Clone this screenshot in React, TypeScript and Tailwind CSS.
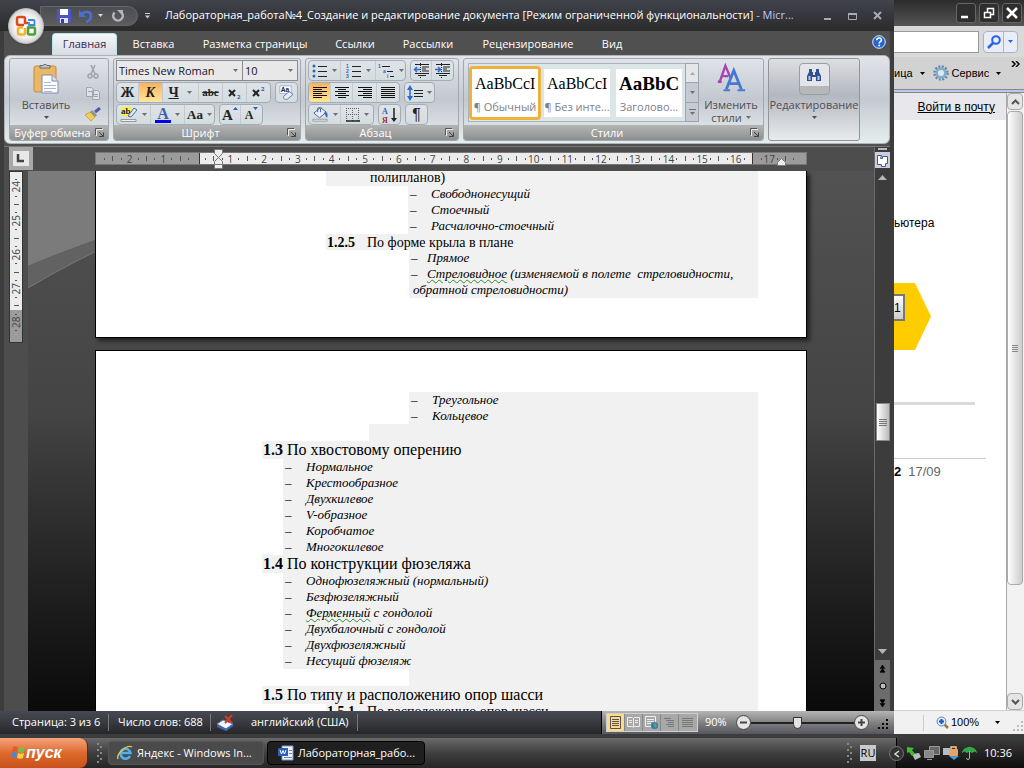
import type { ReactNode } from 'react';

/* ------------------------------------------------------------- */
/* Data                                                          */
/* ------------------------------------------------------------- */
const TABS = [
  { label: 'Вставка', cls: 'w-[69px]' },
  { label: 'Разметка страницы', cls: 'w-[126px]' },
  { label: 'Ссылки', cls: 'w-[66px]' },
  { label: 'Рассылки', cls: 'w-[72px]' },
  { label: 'Рецензирование', cls: 'w-[120px]' },
  { label: 'Вид', cls: 'w-[40px]' },
];

const TAIL = ['Нормальное', 'Крестообразное', 'Двухкилевое', 'V-образное', 'Коробчатое', 'Многокилевое'];

const RULER_LEFT = ['·', '|', '·', '2', '·', '|', '·', '1', '·', '|', '·'];
const RULER_MAIN = Array.from({ length: 65 }, (_, i) => {
  if (i % 2 === 0) return '·';
  return i % 4 === 3 ? String((i + 1) / 4) : '|';
});
const RULER_SIDE = ['·', '24', '·', '|', '·', '25', '·', '|', '·', '26', '·', '|', '·', '27', '·', '|'];

/* ------------------------------------------------------------- */
/* Small parts                                                   */
/* ------------------------------------------------------------- */
function Caret({ className = 'text-[#6b6f76]' }: { className?: string }) {
  return (
    <svg viewBox="0 0 5 3" className={`h-[3px] w-[5px] shrink-0 ${className}`}>
      <path d="M0 0h5L2.5 3z" fill="currentColor" />
    </svg>
  );
}

function Cluster({ children, className = '' }: { children: ReactNode; className?: string }) {
  return (
    <div
      className={`flex h-[21px] divide-x divide-[#c3cbd0] overflow-hidden rounded-sm border border-[#a3adb5] bg-linear-to-b from-[#dfe3e8] to-[#d3dde0] ${className}`}
    >
      {children}
    </div>
  );
}

function Tool({
  label,
  children,
  active = false,
  className = 'w-[22px]',
}: {
  label: string;
  children: ReactNode;
  active?: boolean;
  className?: string;
}) {
  return (
    <button
      type="button"
      aria-label={label}
      className={`flex items-center justify-center gap-1 text-[#222] ${className} ${
        active ? 'bg-linear-to-b from-[#fbb25c] to-[#ffe69a]' : ''
      }`}
    >
      {children}
    </button>
  );
}

function Group({ title, children, className }: { title: string; children: ReactNode; className: string }) {
  return (
    <section
      className={`flex shrink-0 flex-col overflow-hidden rounded-[3px] border border-[#a4a7ad] bg-linear-to-b from-[#e0e3e8] via-[#c3c8d0] to-[#e6efef] ${className}`}
    >
      <div className="flex-1 overflow-hidden">{children}</div>
      <footer className="flex h-[15px] items-center bg-linear-to-b from-[#b3b5b5] to-[#8e9090] pr-1 text-[11px] leading-[15px] text-white">
        <span className="flex-1 text-center whitespace-nowrap">{title}</span>
        <svg viewBox="0 0 9 9" className="h-[9px] w-[9px] shrink-0" fill="none">
          <path d="M.5 7V.5H7" stroke="#555" />
          <path d="M1.5 8V1.5H8" stroke="#eee" />
          <path d="M4 4l4 4M8.5 4.5v4H4" stroke="#444" />
        </svg>
      </footer>
    </section>
  );
}

function Lines({ rows }: { rows: number[][] }) {
  return (
    <svg viewBox="0 0 16 14" className="h-[14px] w-4" shapeRendering="crispEdges">
      {rows.map(([x, w], i) => (
        <rect key={i} x={x} y={i * 2 + 1} width={w} height="1" fill="#111" />
      ))}
    </svg>
  );
}

function ListIcon({ marks }: { marks: string[] }) {
  return (
    <svg viewBox="0 0 16 16" className="h-4 w-4 font-['Liberation_Sans']">
      {marks.map((m, i) =>
        m === 'dot' ? (
          <circle key={i} cx="2" cy={3 + i * 5} r="1.5" fill="#3461b5" />
        ) : (
          <text key={i} x="0" y={5 + i * 5} fontSize="5" fontWeight="700" fill="#3461b5">
            {m}
          </text>
        ),
      )}
      <path d="M6 3.500h9M6 8.500h9M6 13.500h9" stroke="#222" />
    </svg>
  );
}

function IndentIcon({ flip = false }: { flip?: boolean }) {
  return (
    <svg viewBox="0 0 17 15" className="h-[15px] w-[17px]" fill="none">
      <path d="M2 1.500h14M9 4h7M9 6h4M9 8h7M2 10.500h14M5 12.500h8" stroke="#222" />
      <path d="M7.500 0v15" stroke="#222" strokeDasharray="1 1" />
      <path d={flip ? 'M1 6.500h5M4 4l2.500 2.500L4 9' : 'M2 6.500h5M4 4L1.500 6.500 4 9'} stroke="#2f68d0" strokeWidth="1.500" />
    </svg>
  );
}

/* ------------------------------------------------------------- */
/* Title bar and tabs                                            */
/* ------------------------------------------------------------- */
function OfficeButton() {
  return (
    <button
      type="button"
      aria-label="Office"
      className="absolute top-2 left-2 z-10 flex h-9 w-9 items-center justify-center rounded-full border border-[#bbb] bg-radial from-white via-[#f0f0f0] to-[#a9a9a9] shadow"
    >
      <svg viewBox="0 0 24 24" className="h-6 w-6 shrink-0" fill="none" strokeWidth="2.500">
        <path d="M10 11H5a2 2 0 0 1-2-2V5a2 2 0 0 1 2-2h4a2 2 0 0 1 2 2v4h3" stroke="#dd4a1c" />
        <path d="M14 6h5.500a1 1 0 0 1 1 1v4H15V8" stroke="#3f8ad8" strokeWidth="1.800" />
        <path d="M11 14v5a1.500 1.500 0 0 1-1.500 1.500h-4A1.500 1.500 0 0 1 4 19v-4a1.500 1.500 0 0 1 1.500-1.500H9" stroke="#f5b325" />
        <path d="M14 17v-3.500h5.500A1.500 1.500 0 0 1 21 15v4a1.500 1.500 0 0 1-1.500 1.500h-4A1.500 1.500 0 0 1 14 19z" stroke="#4f9f3c" />
      </svg>
    </button>
  );
}

function TitleBar() {
  return (
    <header className="flex h-[31px] shrink-0 items-center bg-linear-to-b from-[#42444d] via-[#3a3c43] via-30% to-[#2b2b2b] pr-3 pl-10">
      <div className="flex h-5 w-[98px] shrink-0 items-center rounded-r-full border border-[#66666a] bg-linear-to-b from-[#4c4e54] to-[#5c5c5c] pl-4">
        <button type="button" aria-label="Сохранить">
          <svg viewBox="0 0 14 14" className="h-[14px] w-[14px]">
            <path d="M0 0h14v14H1.500L0 12.500z" fill="#4b55c8" />
            <path d="M3 0h8v6H3z" fill="#fff" />
            <path d="M3 9h8v5H3z" fill="#dfe3f4" />
            <path d="M4 10h3v4H4z" fill="#3a3f9c" />
          </svg>
        </button>
        <button type="button" aria-label="Отменить" className="ml-2 flex items-center gap-[5px]">
          <svg viewBox="0 0 14 14" className="h-[14px] w-[14px]" fill="none">
            <path d="M3 5c4-4 9-2 9 2 0 3-2 5-5 6" stroke="#4672d8" strokeWidth="2.500" />
            <path d="M0 1v7h7z" fill="#4672d8" />
          </svg>
          <Caret className="text-[#d5d5d5]" />
        </button>
        <button type="button" aria-label="Повторить" className="ml-2">
          <svg viewBox="0 0 14 14" className="h-[14px] w-[14px]" fill="none">
            <path d="M3.500 3.500a4.800 4.800 0 1 0 7 0" stroke="#b4b6bb" strokeWidth="2.500" />
            <path d="M6 1h6v6z" fill="#b4b6bb" />
          </svg>
        </button>
      </div>
      <svg viewBox="0 0 5 6" className="ml-[7px] h-[6px] w-[5px] shrink-0">
        <path d="M0 .5h5" stroke="#ccc" />
        <path d="M0 2.500h5L2.500 5.500z" fill="#ccc" />
      </svg>
      <h1 className="ml-[15px] flex-1 truncate text-[11px] font-medium text-white">
        Лабораторная_работа№4_Создание и редактирование документа [Режим ограниченной функциональности]
        <span className="font-normal text-[#b9c8ff]"> - Micr...</span>
      </h1>
      <div className="flex items-center gap-4 text-[#a7abb5]">
        <button type="button" aria-label="Свернуть">
          <svg viewBox="0 0 9 9" className="h-[9px] w-[9px]">
            <path d="M1 8h7" stroke="currentColor" strokeWidth="2" />
          </svg>
        </button>
        <button type="button" aria-label="Развернуть">
          <svg viewBox="0 0 9 9" className="h-[9px] w-[9px]">
            <path d="M.5 2.500h8v6h-8z" stroke="currentColor" fill="none" />
            <path d="M0 3h9" stroke="currentColor" strokeWidth="2" />
          </svg>
        </button>
        <button type="button" aria-label="Закрыть">
          <svg viewBox="0 0 9 9" className="h-[9px] w-[9px]">
            <path d="M1 1l7 7M8 1L1 8" stroke="currentColor" strokeWidth="2" />
          </svg>
        </button>
      </div>
    </header>
  );
}

function TabStrip() {
  return (
    <nav className="flex h-6 shrink-0 items-stretch bg-[#505050] pt-[2px] pr-1 pl-12 text-[11px] text-white">
      <button
        type="button"
        className="w-[65px] shrink-0 rounded-t border border-b-0 border-[#b9e6ec] bg-linear-to-b from-[#f4f6f8] to-[#d8dce2] text-[#3a2a55]"
      >
        Главная
      </button>
      <div className="flex flex-1 gap-1 pl-[2px]">
        {TABS.map((t) => (
          <button key={t.label} type="button" className={`text-center whitespace-nowrap ${t.cls}`}>
            {t.label}
          </button>
        ))}
      </div>
      <button type="button" aria-label="Справка">
        <svg viewBox="0 0 14 14" className="mb-1 h-[14px] w-[14px]">
          <circle cx="7" cy="7" r="6.300" fill="#2765cf" stroke="#dce9ff" />
          <path d="M4.800 5.300c0-3 4.600-3 4.600-.3 0 1.600-2.200 1.600-2.200 3.400" stroke="#fff" strokeWidth="1.600" fill="none" />
          <circle cx="7.200" cy="10.500" r="1" fill="#fff" />
        </svg>
      </button>
    </nav>
  );
}

/* ------------------------------------------------------------- */
/* Ribbon                                                        */
/* ------------------------------------------------------------- */
function ClipboardGroup() {
  return (
    <Group title="Буфер обмена" className="w-[100px]">
      <div className="flex h-full pl-3">
        <button type="button" className="flex w-12 flex-col items-center pt-1 text-[11px] text-[#4d4d57]">
          <svg viewBox="0 0 28 32" className="h-8 w-7">
            <rect x="2" y="3" width="22" height="26" rx="2" fill="#e9b765" stroke="#bf8d40" />
            <path d="M8 5V2.500h3a2.500 2.500 0 0 1 4 0h3V5z" fill="#c4cad0" stroke="#666" />
            <path d="M10 12h10l6 6v12H10z" fill="#fdfdff" stroke="#7c8daf" />
            <path d="M20 12v6h6" fill="#dbe4f5" stroke="#7c8daf" />
            <path d="M12 19.500h7M12 22.500h12M12 25.500h12M12 28.500h8" stroke="#a8b8d4" />
          </svg>
          <span className="mt-[2px] leading-4">Вставить</span>
          <Caret className="mt-[3px]" />
        </button>
        <div className="flex flex-1 flex-col items-center gap-[7px] pt-[6px] pl-2">
          <button type="button" aria-label="Вырезать">
            <svg viewBox="0 0 14 14" className="h-[14px] w-[14px]" fill="none" stroke="#a0a4ab" strokeWidth="1.500">
              <path d="M5 0l4 9M9 0L5 9" />
              <circle cx="4" cy="11" r="2" />
              <circle cx="10" cy="11" r="2" />
            </svg>
          </button>
          <button type="button" aria-label="Копировать">
            <svg viewBox="0 0 14 14" className="h-[14px] w-[14px]" fill="#dfe2e6" stroke="#a0a4ab">
              <path d="M.5 1.500h5l2 2v7h-7zM6.500 4.500h5l2 2v7h-7z" />
              <path d="M2 5.500h4M8 8.500h4M8 10.500h4" />
            </svg>
          </button>
          <button type="button" aria-label="Формат по образцу">
            <svg viewBox="0 0 16 14" className="h-[14px] w-4">
              <path d="M15 1l-5 4" stroke="#5259a8" strokeWidth="3" />
              <path d="M7 3l5 5-2 2-5-5z" fill="#8d8f99" />
              <path d="M5 5l5 5-4 4-6-6z" fill="#f3cc55" stroke="#b58c20" strokeWidth=".6" />
            </svg>
          </button>
        </div>
      </div>
    </Group>
  );
}

function FontGroup() {
  return (
    <Group title="Шрифт" className="w-[188px]">
      <div className="flex flex-col gap-px px-[2px] pt-px">
        <div className="flex h-[21px] border border-[#898d92] bg-[#e8e8e8]">
          <div className="relative flex-1 border-r border-[#898d92]">
            <select
              aria-label="Шрифт"
              defaultValue="tnr"
              className="block h-[19px] w-full appearance-none pl-[2px] text-[11px] leading-[19px] text-[#15152e] outline-none"
            >
              <option value="tnr">Times New Roman</option>
            </select>
            <Caret className="pointer-events-none absolute top-2 right-1 text-[#6b6f76]" />
          </div>
          <div className="relative w-[54px]">
            <select
              aria-label="Размер"
              defaultValue="10"
              className="block h-[19px] w-full appearance-none pl-[2px] text-[11px] leading-[19px] text-[#15152e] outline-none"
            >
              <option value="10">10</option>
            </select>
            <Caret className="pointer-events-none absolute top-2 right-1 text-[#6b6f76]" />
          </div>
        </div>
        <div className="flex gap-1">
          <Cluster className="font-['Liberation_Serif'] text-sm font-bold">
            <Tool label="Полужирный">Ж</Tool>
            <Tool label="Курсив" active className="w-6 italic">К</Tool>
            <Tool label="Подчеркнутый" className="w-9">
              <span className="leading-4 underline">Ч</span>
              <Caret className="ml-1 text-[#6b6f76]" />
            </Tool>
            <Tool label="Зачеркнутый" className="w-[25px] text-[11px] line-through">abc</Tool>
            <Tool label="Подстрочный" className="w-6">
              <svg viewBox="0 0 14 14" className="h-[14px] w-[14px] font-['Open_Sans']">
                <path d="M1 4l6 6M7 4l-6 6" stroke="#222" strokeWidth="2" />
                <text x="9" y="13" fontSize="6" fill="#2f5db5">2</text>
              </svg>
            </Tool>
            <Tool label="Надстрочный" className="w-[23px]">
              <svg viewBox="0 0 14 14" className="h-[14px] w-[14px] font-['Open_Sans']">
                <path d="M1 4l6 6M7 4l-6 6" stroke="#222" strokeWidth="2" />
                <text x="9" y="5" fontSize="6" fill="#2f5db5">2</text>
              </svg>
            </Tool>
          </Cluster>
          <Cluster>
            <Tool label="Очистить формат" className="w-[21px]">
              <svg viewBox="0 0 18 18" className="h-[17px] w-[17px] font-['Liberation_Sans']">
                <path d="M2 2h12v8H2z" fill="#fff" stroke="#889" strokeWidth=".6" />
                <text x="3" y="8" fontSize="7" fontWeight="700" fill="#223">Aa</text>
                <path d="M6 13l6-5 4 3-6 5c-3 1-5-1-4-3z" fill="#e8eefb" stroke="#5b79b8" />
              </svg>
            </Tool>
          </Cluster>
        </div>
        <div className="flex gap-1">
          <Cluster className="font-['Liberation_Serif'] text-base font-bold">
            <Tool label="Цвет выделения" className="w-[34px]">
              <svg viewBox="0 0 18 17" className="h-[17px] w-[18px]">
                <path d="M1 1h10v9H1z" fill="#f6ee4c" />
                <text x="1" y="8" fontSize="9" fontWeight="700" fill="#222">ab</text>
                <path d="M8 10l6-8 3 2-6 7z" fill="#dfe8f7" stroke="#456ba8" />
                <path d="M1 13.500h15v2H1z" fill="#eee" stroke="#999" />
              </svg>
              <Caret />
            </Tool>
            <Tool label="Цвет текста" className="w-[34px]">
              <span className="border-b-[3px] border-[#0000f0] px-[2px] leading-[13px] text-[#3c5fb0]">А</span>
              <Caret />
            </Tool>
            <Tool label="Регистр" className="w-[29px]">
              <span className="text-[13px]">Aa</span>
              <Caret />
            </Tool>
          </Cluster>
          <Cluster className="font-['Liberation_Serif'] font-bold">
            <Tool label="Увеличить размер" className="w-[21px] text-[15px]">
              <span className="flex items-start pt-[2px] leading-[17px]">
                A
                <svg viewBox="0 0 5 3" className="h-[3px] w-[5px]"><path d="M0 3h5L2.500 0z" fill="#2f5db5" /></svg>
              </span>
            </Tool>
            <Tool label="Уменьшить размер" className="w-[21px] text-xs">
              <span className="flex items-start pt-[2px] leading-[17px]">
                A
                <svg viewBox="0 0 5 3" className="h-[3px] w-[5px]"><path d="M0 0h5L2.500 3z" fill="#2f5db5" /></svg>
              </span>
            </Tool>
          </Cluster>
        </div>
      </div>
    </Group>
  );
}

function ParagraphGroup() {
  return (
    <Group title="Абзац" className="w-[154px]">
      <div className="flex flex-col gap-px px-[2px] pt-px">
        <div className="flex gap-1">
          <Cluster>
            <Tool label="Маркеры" className="w-8"><ListIcon marks={['dot', 'dot', 'dot']} /><Caret /></Tool>
            <Tool label="Нумерация" className="w-[35px]"><ListIcon marks={['1', '2', '3']} /><Caret /></Tool>
            <Tool label="Многоуровневый список" className="w-[29px]">
              <svg viewBox="0 0 17 16" className="h-4 w-[17px] font-['Liberation_Sans']">
                <path d="M4 3.500h8M9 8.500h6M12 13.500h4" stroke="#222" />
                <text x="0" y="5" fontSize="5" fontWeight="700" fill="#3461b5">1</text>
                <text x="5" y="10" fontSize="5" fontWeight="700" fill="#3461b5">a</text>
                <text x="9" y="15" fontSize="5" fontWeight="700" fill="#3461b5">i</text>
              </svg>
              <Caret />
            </Tool>
          </Cluster>
          <Cluster>
            <Tool label="Уменьшить отступ" className="w-[21px]"><IndentIcon /></Tool>
            <Tool label="Увеличить отступ" className="w-[21px]"><IndentIcon flip /></Tool>
          </Cluster>
        </div>
        <div className="flex gap-1">
          <Cluster>
            <Tool label="По левому краю" active>
              <Lines rows={[[1, 14], [1, 9], [1, 14], [1, 9], [1, 14], [1, 9]]} />
            </Tool>
            <Tool label="По центру">
              <Lines rows={[[1, 14], [4, 8], [1, 14], [4, 8], [1, 14], [4, 8]]} />
            </Tool>
            <Tool label="По правому краю" className="w-6">
              <Lines rows={[[1, 14], [6, 9], [1, 14], [6, 9], [1, 14], [6, 9]]} />
            </Tool>
            <Tool label="По ширине">
              <Lines rows={[[1, 14], [1, 14], [1, 14], [1, 14], [1, 14], [1, 14]]} />
            </Tool>
          </Cluster>
          <Cluster>
            <Tool label="Интервал" className="w-[29px]">
              <svg viewBox="0 0 16 16" className="h-4 w-4">
                <path d="M3 3v10" stroke="#2f68d0" strokeWidth="1.500" />
                <path d="M0 5l3-5 3 5zM0 11l3 5 3-5z" fill="#2f68d0" />
                <path d="M7 5.500h9M7 8.500h9M7 11.500h9" stroke="#222" />
              </svg>
              <Caret />
            </Tool>
          </Cluster>
        </div>
        <div className="flex gap-1">
          <Cluster>
            <Tool label="Заливка" className="w-8">
              <svg viewBox="0 0 18 17" className="h-[17px] w-[17px]">
                <path d="M9 1l6 5-7 6-6-5z" fill="#e9eef8" stroke="#41629f" />
                <path d="M6 6V2a2 2 0 0 1 3 0v4" fill="none" stroke="#41629f" />
                <path d="M14 5c3 2 3 4 2 7-2-1-2-4-3-5z" fill="#3c6ac4" />
                <path d="M1 13.500h15v2H1z" fill="#eee" stroke="#999" />
              </svg>
              <Caret />
            </Tool>
            <Tool label="Границы" className="w-8">
              <svg viewBox="0 0 14 14" className="h-[14px] w-[14px]" fill="none" stroke="#666" strokeDasharray="1 1">
                <path d="M.5 0v13M6.500 0v13M12.500 0v13M0 .5h13M0 6.500h13" />
                <path d="M0 13h14" stroke="#222" strokeWidth="1.500" strokeDasharray="none" />
              </svg>
              <Caret />
            </Tool>
          </Cluster>
          <Cluster>
            <Tool label="Сортировка" className="w-[21px]">
              <svg viewBox="0 0 16 18" className="h-[18px] w-4 font-['Liberation_Serif']">
                <text x="0" y="8" fontSize="8" fontWeight="700" fill="#3461b5">А</text>
                <text x="0" y="17" fontSize="8" fontWeight="700" fill="#9a3030">Я</text>
                <path d="M12 2v13" stroke="#222" strokeWidth="1.500" />
                <path d="M9 12h6l-3 4z" fill="#222" />
              </svg>
            </Tool>
          </Cluster>
          <Cluster>
            <Tool label="Знаки абзаца" className="w-[21px] font-['Liberation_Sans'] text-base">¶</Tool>
          </Cluster>
        </div>
      </div>
    </Group>
  );
}

function StyleCard({ sample, name, bold = false, active = false }: { sample: string; name: string; bold?: boolean; active?: boolean }) {
  return (
    <button
      type="button"
      className={`flex h-[54px] w-[72px] shrink-0 flex-col overflow-hidden border-[3px] bg-white ${
        active ? 'rounded-sm border-[#f0b13a]' : 'border-[#dce6e6]'
      }`}
    >
      <span
        className={`flex h-[31px] w-full items-center overflow-hidden pl-[3px] font-['Liberation_Serif'] whitespace-nowrap text-black ${
          bold ? 'text-[19px] font-bold' : 'text-base'
        }`}
      >
        {sample}
      </span>
      <span className="w-full text-center text-[11px] leading-[14px] whitespace-nowrap text-[#80808a]">{name}</span>
    </button>
  );
}

function StylesGroup() {
  return (
    <Group title="Стили" className="w-[301px]">
      <div className="flex h-full">
        <div className="mt-1 ml-1 flex h-[59px] items-center border border-r-0 border-[#a9b3b8] bg-[#dce6e6]">
          <StyleCard active sample="AaBbCcI" name="¶ Обычный" />
          <StyleCard sample="AaBbCcI" name="¶ Без инте..." />
          <StyleCard bold sample="AaBbC" name="Заголово..." />
        </div>
        <div className="mt-1 flex h-[59px] w-[14px] flex-col divide-y divide-[#9fa4ac] border border-[#9fa4ac] bg-[#c6cad2]">
          <button type="button" aria-label="Вверх" className="flex flex-1 items-center justify-center bg-[#e4e6e9]">
            <Caret className="rotate-180 text-[#a5a8ac]" />
          </button>
          <button type="button" aria-label="Вниз" className="flex flex-1 items-center justify-center"><Caret /></button>
          <button type="button" aria-label="Все стили" className="flex flex-1 flex-col items-center justify-center gap-[2px]">
            <span className="h-px w-[7px] bg-[#6b6f76]" />
            <Caret />
          </button>
        </div>
        <button type="button" className="flex flex-1 flex-col items-center pt-1 text-[11px] leading-[13px] text-[#4d4d57]">
          <svg viewBox="0 0 32 32" className="h-[30px] w-[30px]" fill="none">
            <path d="M2 20h4M4 20L10 3l6 14M6 14h7" stroke="#a545b5" strokeWidth="2.500" />
            <path d="M11 28l8-20 8 20M14 22h10" stroke="#4679d2" strokeWidth="3" />
            <path d="M8 29h7M23 29h8" stroke="#4679d2" strokeWidth="2" />
          </svg>
          <span className="mt-[5px]">Изменить</span>
          <span className="flex items-center gap-1">
            стили <Caret />
          </span>
        </button>
      </div>
    </Group>
  );
}

function EditingGroup() {
  return (
    <button
      type="button"
      className="flex w-[92px] shrink-0 flex-col items-center rounded-[3px] border border-[#92959b] bg-linear-to-b from-[#dedfe2] via-[#b3b7c0] via-45% to-[#e9ebec] pt-1 text-[11px] text-[#4d4d57]"
    >
      <span className="flex h-8 w-[31px] items-start justify-center rounded border border-[#9a9da3] bg-linear-to-b from-[#e3e5e8] from-75% to-[#b5b7b9] to-75% pt-1">
        <svg viewBox="0 0 16 14" className="h-[14px] w-4" fill="#315091">
          <path d="M3 1h3v3h1v3h2V4h1V1h3v3l2 4v5h-5V9H6v4H1V8l2-4z" />
          <path d="M2.500 8h2v4h-2zM11.500 8h2v4h-2z" fill="#b9cdf0" />
        </svg>
      </span>
      <span className="mt-[2px] leading-4 whitespace-nowrap">Редактирование</span>
      <Caret className="mt-[3px]" />
    </button>
  );
}

/* ------------------------------------------------------------- */
/* Rulers and document                                           */
/* ------------------------------------------------------------- */
function Marks({ items, className }: { items: string[]; className: string }) {
  return (
    <div className={`flex items-center ${className}`}>
      {items.map((m, i) =>
        m === '|' ? (
          <span key={i} className="flex flex-1 justify-center"><span className="h-[5px] w-px bg-[#555]" /></span>
        ) : m === '·' ? (
          <span key={i} className="flex flex-1 justify-center"><span className="h-[2px] w-px bg-[#555]" /></span>
        ) : (
          <span key={i} className="flex w-0 flex-1 justify-center text-[10px] leading-3">{m}</span>
        ),
      )}
    </div>
  );
}

function SideMarks({ items, className }: { items: string[]; className: string }) {
  return (
    <div className={`flex flex-col items-center ${className}`}>
      {items.map((m, i) =>
        m === '|' ? (
          <span key={i} className="flex flex-1 items-center"><span className="h-px w-[5px] bg-[#555]" /></span>
        ) : m === '·' ? (
          <span key={i} className="flex flex-1 items-center"><span className="h-px w-[2px] bg-[#555]" /></span>
        ) : (
          <span key={i} className="flex h-0 flex-1 rotate-180 items-center justify-center text-[10px] leading-3 [writing-mode:vertical-rl]">
            {m}
          </span>
        ),
      )}
    </div>
  );
}

function TopRuler() {
  return (
    <div className="flex h-6 shrink-0 items-start bg-[#4d4d4d] px-[5px]">
      <button type="button" aria-label="Табуляция" className="h-[23px] w-6 border-[4px] border-[#a8a8a8] bg-[#e8e8e8]">
        <svg viewBox="0 0 16 15" className="h-full w-full">
          <path d="M5 3v7h6" stroke="#444" strokeWidth="2.500" fill="none" />
        </svg>
      </button>
      <div className="min-w-0 flex-1">
        <div className="relative mx-auto mt-[5px] flex h-[13px] w-[712px] border border-[#777] text-[#444]">
          <Marks items={RULER_LEFT} className="w-[103px] bg-[#9b9b9b] pr-[6px] pl-1" />
          <Marks items={RULER_MAIN} className="flex-1 border-x border-[#333] bg-[#ececec] pr-1 pl-px" />
          <Marks items={['·', '17', '·', '|', '·', ' ']} className="w-[53px] bg-[#9b9b9b] pl-1" />
          <svg viewBox="0 0 9 20" className="absolute -top-1 left-[118px] h-5 w-[9px]">
            <path d="M.5.5h8v4l-4 4-4-4zM.5 15.500v-3l4-4 4 4v3zM.5 15.500h8v4h-8z" fill="#eee" stroke="#777" />
          </svg>
          <svg viewBox="0 0 9 8" className="absolute top-[5px] left-[681px] h-2 w-[9px]">
            <path d="M.5 7.500v-3l4-4 4 4v3z" fill="#eee" stroke="#777" />
          </svg>
        </div>
      </div>
    </div>
  );
}

function Item({ children, className = 'ml-[187px]' }: { children: ReactNode; className?: string }) {
  return (
    <li className={`flex h-4 bg-[#f1f1f1] pl-[2px] text-[13px] leading-4 whitespace-nowrap italic ${className}`}>
      <span className="w-[21px] shrink-0">–</span>
      <span>{children}</span>
    </li>
  );
}

function Heading({ num, children }: { num: string; children: ReactNode }) {
  return (
    <h2 className="ml-[166px] h-[18px] bg-[#f1f1f1] pl-px text-base leading-[18px] whitespace-nowrap">
      <b>{num}</b> {children}
    </h2>
  );
}

const wavy = 'underline decoration-[#2b8a2b] decoration-wavy decoration-1 underline-offset-1';

function Pages() {
  return (
    <div className="relative min-w-0 flex-1 overflow-hidden bg-linear-to-b from-[#525252] via-[#444] via-45% to-[#0a0a0a]">
      <svg viewBox="0 0 100 140" className="absolute top-0 left-0 h-[140px] w-[100px]">
        <path d="M0 0h100v58Q50 74 0 95z" fill="#7b7b7b" />
        <path d="M0 95Q50 74 100 58v8Q50 87 0 117z" fill="#626262" />
        <path d="M0 117Q50 87 100 66" stroke="#777" fill="none" />
      </svg>
      <div className="relative flex flex-col gap-3 font-['Liberation_Serif',serif] text-black">
        <article className="mx-auto h-[167px] w-[712px] border border-t-0 border-black bg-white pr-12 shadow-[3px_3px_4px_#222]">
          <p className="ml-[230px] h-[15px] bg-[#f1f1f1] pl-11 text-sm leading-[14px]">полипланов)</p>
          <ul>
            <Item className="ml-[312px]">Свободнонесущий</Item>
            <Item className="ml-[312px]">Стоечный</Item>
            <Item className="ml-[312px]">Расчалочно-стоечный</Item>
          </ul>
          <h3 className="ml-[230px] flex h-4 bg-[#f1f1f1] pl-px text-sm leading-[17px]">
            <b className="w-10">1.2.5</b>По форме крыла в плане
          </h3>
          <ul>
            <li className="ml-[313px] flex h-4 bg-[#f1f1f1] pl-[2px] text-[13px] leading-4 italic">
              <span className="w-4">–</span>Прямое
            </li>
            <li className="ml-[313px] h-8 bg-[#f1f1f1] pl-1 text-[13px] leading-4 whitespace-nowrap italic">
              <span className="inline-block w-[14px] -indent-[2px]">–</span>
              <span className={wavy}>Стреловидное</span> (изменяемой в полете&nbsp; стреловидности,
              <br />
              обратной стреловидности)
            </li>
          </ul>
        </article>
        <article className="mx-auto w-[712px] border border-black bg-white pt-[41px] pr-12">
          <ul>
            <Item className="ml-[313px]">Треугольное</Item>
            <Item className="ml-[313px]">Кольцевое</Item>
          </ul>
          <div className="ml-[273px] h-[17px] bg-[#f1f1f1]" />
          <Heading num="1.3">По хвостовому оперению</Heading>
          <ul>
            {TAIL.map((t) => (
              <Item key={t}>{t}</Item>
            ))}
          </ul>
          <Heading num="1.4">По конструкции фюзеляжа</Heading>
          <ul>
            <Item>Однофюзеляжный (нормальный)</Item>
            <Item>Безфюзеляжный</Item>
            <Item>
              <span className={wavy}>Ферменный</span> с гондолой
            </Item>
            <Item>Двухбалочный с гондолой</Item>
            <Item>Двухфюзеляжный</Item>
            <Item>Несущий фюзеляж</Item>
          </ul>
          <div className="ml-[313px] h-[17px] bg-[#f1f1f1]" />
          <Heading num="1.5">По типу и расположению опор шасси</Heading>
          <h3 className="ml-[230px] flex h-4 bg-[#f1f1f1] pl-px text-sm leading-4">
            <b className="w-10">1.5.1</b>По расположению опор шасси
          </h3>
        </article>
      </div>
    </div>
  );
}

function WordScrollbar() {
  return (
    <div className="flex w-4 shrink-0 flex-col items-center border-l border-[#6a6a6a] bg-[#3c3c3c]">
      <span className="h-[3px] w-[9px] border-b-2 border-[#bbb]" />
      <button type="button" aria-label="Линейка" className="mt-[2px] flex h-4 w-[15px] items-center justify-center bg-[#c6cee0]">
        <svg viewBox="0 0 13 13" className="h-[13px] w-[13px]" fill="#fff" stroke="#445a88">
          <path d="M1.500 1.500h4l-1 3h2v-2h5v7h-2v3h-4v-2h-4z" />
        </svg>
      </button>
      <button type="button" aria-label="Вверх" className="mt-[7px]">
        <svg viewBox="0 0 9 5" className="block h-[5px] w-[9px]"><path d="M0 5h9L4.500 0z" fill="#b5b5b5" /></svg>
      </button>
      <div className="w-full flex-[221]" />
      <div className="flex h-[38px] w-[14px] shrink-0 flex-col items-center justify-center gap-px border border-[#888] bg-linear-to-r from-white to-[#bbb]">
        <span className="h-px w-2 bg-[#777]" />
        <span className="h-px w-2 bg-[#777]" />
        <span className="h-px w-2 bg-[#777]" />
        <span className="h-px w-2 bg-[#777]" />
      </div>
      <div className="w-full flex-[206]" />
      <button type="button" aria-label="Вниз" className="mb-[6px]">
        <svg viewBox="0 0 9 5" className="block h-[5px] w-[9px]"><path d="M0 0h9L4.500 5z" fill="#b5b5b5" /></svg>
      </button>
      <div className="flex h-[51px] w-full shrink-0 flex-col items-center justify-around bg-[#6c6c6c] text-black">
        <svg viewBox="0 0 7 8" className="h-2 w-[7px]"><path d="M1 3.500h5L3.500 0zM1 7h5L3.500 3.500zM1 7.500h5" fill="#000" stroke="#000" strokeWidth=".5" /></svg>
        <svg viewBox="0 0 8 8" className="h-2 w-2"><circle cx="4" cy="4" r="3" fill="#bbb" stroke="#000" /></svg>
        <svg viewBox="0 0 7 8" className="h-2 w-[7px]"><path d="M1 1h5L3.500 4.500zM1 4.500h5L3.500 8zM1 .5h5" fill="#000" stroke="#000" strokeWidth=".5" /></svg>
      </div>
    </div>
  );
}

function ViewIcon({ d, color = '#555' }: { d: string; color?: string }) {
  return (
    <svg viewBox="0 0 13 13" className="h-[13px] w-[13px]" fill="none" stroke={color}>
      <path d={d} />
    </svg>
  );
}

function StatusBar() {
  return (
    <footer className="flex h-[23px] shrink-0 items-center bg-linear-to-b from-[#454953] via-[#3a3c40] via-45% to-[#26272a] text-[11px] font-medium whitespace-nowrap text-white">
      <span className="ml-3 w-[97px] border-r border-[#77797e]">Страница: 3 из 6</span>
      <span className="w-[102px] border-r border-[#77797e] pl-[9px]">Число слов: 688</span>
      <svg viewBox="0 0 17 16" className="ml-[6px] h-4 w-[17px]">
        <path d="M0 9l6-4 10 4-7 5z" fill="#f5f7fb" stroke="#5c7fc0" />
        <path d="M0 11l9 4 7-5" stroke="#3d66b8" fill="none" strokeWidth="2" />
        <path d="M8 1l7 7M15 0L8 8" stroke="#dc3a20" strokeWidth="2" />
      </svg>
      <span className="ml-[17px] w-[107px] border-r border-[#77797e]">английский (США)</span>
      <div className="ml-auto flex h-full w-[293px] items-center border-l border-black bg-linear-to-b from-[#b5b5b5] via-[#828282] via-50% to-[#55585f] pl-1">
        <div className="flex h-[19px] divide-x divide-[#888] border border-[#d0d0d0] bg-[#a8a8a8]">
          <button type="button" aria-label="Разметка" className="w-[18px] bg-[#ffd98a] pl-[2px]"><ViewIcon d="M1.500.5h10v12h-10zM3 3.500h7M3 5.500h7M3 7.500h7M3 9.500h7" /></button>
          <button type="button" aria-label="Чтение" className="w-[18px] pl-[2px]"><ViewIcon d="M.5 1.500h5l1 1 1-1h5v9h-5l-1 1-1-1h-5zM6.500 2v9M2 4.500h3M2 6.500h3M8 4.500h3M8 6.500h3" color="#eee" /></button>
          <button type="button" aria-label="Веб" className="w-[18px] pl-[2px]">
            <svg viewBox="0 0 13 13" className="h-[13px] w-[13px]">
              <path d="M.5.5h10v10H.5zM2 3.500h7M2 5.500h7M2 7.500h4" fill="none" stroke="#eee" />
              <circle cx="9.500" cy="9.500" r="3.500" fill="#3278b8" />
              <path d="M8 8l3-1 1 3-2 2z" fill="#58a85c" />
            </svg>
          </button>
          <button type="button" aria-label="Структура" className="w-[18px] pl-[2px]"><ViewIcon d="M1 2.500h7M3 4.500h8M5 6.500h6M3 8.500h8M5 10.500h6" color="#777" /></button>
          <button type="button" aria-label="Черновик" className="w-[18px] pl-[2px]"><ViewIcon d="M1 2.500h11M1 4.500h11M1 6.500h11M1 8.500h11M1 10.500h11" color="#777" /></button>
        </div>
        <span className="ml-[7px] w-[31px] font-normal">90%</span>
        <button type="button" aria-label="Уменьшить" className="flex h-[15px] w-[15px] items-center justify-center rounded-full border border-[#444] bg-[#e5e5e5]">
          <svg viewBox="0 0 9 9" className="h-[9px] w-[9px]"><path d="M1 4.500h7" stroke="#444" strokeWidth="2" /></svg>
        </button>
        <input
          type="range"
          aria-label="Масштаб"
          defaultValue={45}
          className="h-4 w-[103px] appearance-none bg-[linear-gradient(#222,#222)] bg-[length:100%_2px] bg-center bg-no-repeat [&::-webkit-slider-thumb]:h-3 [&::-webkit-slider-thumb]:w-[9px] [&::-webkit-slider-thumb]:appearance-none [&::-webkit-slider-thumb]:rounded-b-full [&::-webkit-slider-thumb]:border [&::-webkit-slider-thumb]:border-[#333] [&::-webkit-slider-thumb]:bg-[#e2e2e2]"
        />
        <button type="button" aria-label="Увеличить" className="flex h-[15px] w-[15px] items-center justify-center rounded-full border border-[#444] bg-[#e5e5e5]">
          <svg viewBox="0 0 9 9" className="h-[9px] w-[9px]"><path d="M1 4.500h7M4.500 1v7" stroke="#444" strokeWidth="2" /></svg>
        </button>
        <Grip className="mt-1 ml-2 text-black" />
      </div>
    </footer>
  );
}

function Grip({ className }: { className: string }) {
  return (
    <svg viewBox="0 0 12 12" className={`h-3 w-3 ${className}`} fill="currentColor">
      <path d="M9 0h2v2H9zM5 4h2v2H5zM9 4h2v2H9zM1 8h2v2H1zM5 8h2v2H5zM9 8h2v2H9z" />
    </svg>
  );
}

/* ------------------------------------------------------------- */
/* Windows                                                       */
/* ------------------------------------------------------------- */
function WordWindow() {
  return (
    <main className="relative flex min-w-0 flex-1 flex-col font-['Open_Sans',sans-serif]">
      <OfficeButton />
      <TitleBar />
      <div className="flex min-h-0 flex-1 flex-col border-x-[4px] border-[#3d3d3d] bg-[#505050]">
        <TabStrip />
        <div className="flex h-[89px] shrink-0 gap-1 rounded-md border border-[#b0b3b8] bg-linear-to-b from-[#e1e4e9] via-[#c5cad2] to-[#e4eeee] p-[2px] pl-1">
          <ClipboardGroup />
          <FontGroup />
          <ParagraphGroup />
          <StylesGroup />
          <EditingGroup />
        </div>
        <div className="mt-[2px] flex min-h-0 flex-1 border-t border-[#777]">
          <div className="flex min-w-0 flex-1 flex-col">
            <TopRuler />
            <div className="flex min-h-0 flex-1">
              <div className="w-6 shrink-0 bg-[#4d4d4d] pl-[5px]">
                <div className="flex w-[14px] flex-col border border-[#333] text-[#444]">
                  <SideMarks items={RULER_SIDE} className="h-[138px] bg-[#ececec] pt-[3px]" />
                  <SideMarks items={['·', '28', '·']} className="h-8 bg-[#9b9b9b] pb-2" />
                </div>
              </div>
              <Pages />
            </div>
          </div>
          <WordScrollbar />
        </div>
      </div>
      <StatusBar />
    </main>
  );
}

function BrowserWindow() {
  return (
    <aside className="flex w-[130px] shrink-0 flex-col overflow-hidden bg-white font-['Liberation_Sans',sans-serif] text-black">
      <header className="flex h-[26px] shrink-0 items-center justify-end gap-[3px] bg-linear-to-b from-[#2c2c2c] to-[#555] pr-[2px] text-white">
        {['M4 13h7', 'M4.500 8.500h6v5h-6zM7.500 8V4.500h6v6H11', 'M4 4l10 10M14 4L4 14'].map((d, i) => (
          <button
            key={d}
            type="button"
            aria-label={['Свернуть', 'Восстановить', 'Закрыть'][i]}
            className="h-5 w-5 rounded-[3px] border border-[#666] bg-[#2e2e2e]"
          >
            <svg viewBox="0 0 18 18" className="h-[18px] w-[18px]" fill="none" stroke="currentColor" strokeWidth={i === 1 ? 1.5 : 2.5}>
              <path d={d} />
            </svg>
          </button>
        ))}
      </header>
      <div className="flex h-[31px] shrink-0 items-center bg-[#d9d9d9] pr-[6px]">
        <input aria-label="Поиск" className="h-[22px] w-[85px] border border-l-0 border-[#999] bg-white" />
        <div className="ml-1 flex h-[22px] flex-1 divide-x divide-[#a9b3cc] rounded-sm border border-[#a9b3cc] bg-[#e9edf7]">
          <button type="button" aria-label="Найти" className="flex flex-1 items-center justify-center">
            <svg viewBox="0 0 14 14" className="h-[14px] w-[14px]" fill="none" stroke="#2a62e0">
              <circle cx="9" cy="5" r="3.800" strokeWidth="2" />
              <path d="M6 8l-5 5" strokeWidth="2.500" />
            </svg>
          </button>
          <button type="button" aria-label="Ещё" className="flex w-[13px] items-center justify-center"><Caret className="text-[#2a62e0]" /></button>
        </div>
      </div>
      <div className="relative flex h-8 shrink-0 items-center overflow-hidden bg-[#d2d2d2] text-[11px]">
        <button type="button" className="flex items-center gap-[7px]">ица <Caret className="text-black" /></button>
        <button type="button" className="ml-2 flex items-center gap-[3px]">
          <svg viewBox="0 0 16 16" className="h-4 w-4">
            <circle cx="8" cy="8" r="6.500" fill="none" stroke="#5e8cae" strokeWidth="2.500" strokeDasharray="2 1.400" />
            <circle cx="8" cy="8" r="4.300" fill="#dbe8f0" stroke="#86acc6" strokeWidth="2.500" />
          </svg>
          Сервис <Caret className="ml-1 text-black" />
        </button>
        <svg viewBox="0 0 9 6" className="absolute top-1 right-1 h-[6px] w-[9px]" fill="none" stroke="#000" strokeWidth="1.500">
          <path d="M1 0l3 3-3 3M5 0l3 3-3 3" />
        </svg>
      </div>
      <div className="h-1 shrink-0 border-y border-[#888] bg-[#b9c8ee]" />
      <div className="flex min-h-0 flex-1">
        <div className="flex min-w-0 flex-1 flex-col">
          <div className="flex h-[27px] shrink-0 items-center justify-end bg-[#e8e8ec] pr-[11px]">
            <a href="#mail" className="text-xs whitespace-nowrap underline">Войти в почту</a>
          </div>
          <p className="mt-[95px] text-xs leading-4">ьютера</p>
          <div className="mt-[52px] flex h-[67px] w-[37px] shrink-0 items-start bg-[#ffcc00] pt-[11px] [clip-path:polygon(0_0,21px_0,100%_50%,21px_100%,0_100%)]">
            <button type="button" className="h-[27px] w-[11px] border-2 border-l-0 border-[#777] bg-linear-to-b from-white to-[#ccc] text-left text-xs">1</button>
          </div>
          <div className="mt-[52px] mr-[31px] h-[3px] shrink-0 bg-[#dadada]" />
          <div className="mt-[53px] mr-5 h-px shrink-0 bg-[#ccc]" />
          <p className="mt-[3px] flex gap-[7px] text-[13px] text-[#666]">
            <b className="text-black">2</b>17/09
          </p>
        </div>
        <div className="flex w-[18px] shrink-0 flex-col border-l border-[#aaa] bg-[#f2f2f2] pr-px">
          <button type="button" aria-label="Вверх" className="flex h-[17px] items-center justify-center rounded-sm border border-[#aaa] bg-[#e5e5e5]">
            <svg viewBox="0 0 9 6" className="h-[6px] w-[9px]"><path d="M1 5l3.500-3.500L8 5" stroke="#555" strokeWidth="2" fill="none" /></svg>
          </button>
          <div className="mt-px flex flex-[474] flex-col items-center justify-center gap-px rounded-sm border border-[#aaa] bg-linear-to-r from-white to-[#ccc]">
            <span className="h-px w-[6px] bg-[#888]" />
            <span className="h-px w-[6px] bg-[#888]" />
            <span className="h-px w-[6px] bg-[#888]" />
            <span className="h-px w-[6px] bg-[#888]" />
          </div>
          <div className="flex-[108]" />
          <button type="button" aria-label="Вниз" className="flex h-[17px] items-center justify-center rounded-sm border border-[#aaa] bg-[#e5e5e5]">
            <svg viewBox="0 0 9 6" className="h-[6px] w-[9px]"><path d="M1 1l3.500 3.500L8 1" stroke="#555" strokeWidth="2" fill="none" /></svg>
          </button>
        </div>
      </div>
      <footer className="flex h-6 shrink-0 items-center border-t border-[#d0d0d0] bg-[#f1f1f1] text-[11px]">
        <span className="ml-[29px] h-4 w-px bg-[#ccc]" />
        <svg viewBox="0 0 13 13" className="ml-3 h-[13px] w-[13px]">
          <path d="M8 8l4 4" stroke="#b07030" strokeWidth="2.500" />
          <circle cx="5.500" cy="5.500" r="4.500" fill="#dcecff" stroke="#5588c8" />
          <path d="M5.500 3v5M3 5.500h5" stroke="#1b55c0" strokeWidth="2" />
        </svg>
        <span className="ml-[2px]">100%</span>
        <Caret className="ml-4 text-black" />
        <Grip className="mt-2 ml-auto text-[#bbb]" />
      </footer>
    </aside>
  );
}

/* ------------------------------------------------------------- */
/* Taskbar                                                       */
/* ------------------------------------------------------------- */
function Handle({ className }: { className: string }) {
  return (
    <svg viewBox="0 0 6 20" className={`h-5 w-[6px] shrink-0 ${className}`} fill="#888">
      <path d="M1 0h2v2H1zM4 3h2v2H4zM1 6h2v2H1zM4 9h2v2H4zM1 12h2v2H1zM4 15h2v2H4zM1 18h2v2H1z" />
    </svg>
  );
}

function Taskbar() {
  return (
    <footer className="flex h-[34px] shrink-0 items-center border-t-[4px] border-[#3c3c3c] bg-linear-to-b from-[#6a6a6a] via-[#3f3f3f] via-50% to-[#262626] font-['Open_Sans',sans-serif] text-[11px] whitespace-nowrap text-white">
      <button
        type="button"
        className="flex h-full w-[88px] shrink-0 items-center rounded-r-lg border-r border-[#622] bg-linear-to-b from-[#f4a27a] via-[#dd6a2c] via-50% to-[#c9501a] pl-[10px] font-['Liberation_Sans'] text-base font-bold italic"
      >
        <svg viewBox="0 0 16 16" className="h-4 w-4 shrink-0">
          <path d="M3 2c2-1 3-1 5 0L7 7C5 6 4 6 2 7z" fill="#e35b2a" />
          <path d="M9 2c2 1 4 1 6 0l-1 5c-2 1-4 1-6 0z" fill="#7cbb42" />
          <path d="M2 8c2-1 3-1 5 0l-1 5c-2-1-3-1-5 0z" fill="#4a86d8" />
          <path d="M8 8c2 1 4 1 6 0l-1 5c-2 1-4 1-6 0z" fill="#f6cf3e" />
        </svg>
        пуск
      </button>
      <Handle className="ml-2" />
      <button type="button" className="ml-[6px] flex h-6 w-[156px] items-center gap-1 overflow-hidden rounded-sm border border-[#555] bg-[#4a4a4a] pl-2">
        <svg viewBox="0 0 16 16" className="h-4 w-4 shrink-0" fill="none">
          <path d="M13 11a5 5 0 1 1 .5-3H4" stroke="#4cb1ee" strokeWidth="2.600" />
          <path d="M1 14C-1 9 10-1 15 2" stroke="#f1c244" strokeWidth="1.400" />
        </svg>
        Яндекс - Windows In...
      </button>
      <button type="button" className="ml-[3px] flex h-6 w-[158px] items-center gap-1 overflow-hidden rounded-sm border border-black bg-[#1f1f1f] pl-[10px]">
        <svg viewBox="0 0 16 16" className="h-4 w-4 shrink-0">
          <path d="M4 1h11v14H4z" fill="#eef3fc" stroke="#7b97c8" />
          <path d="M11 5.500h3M11 8.500h3M6 12.500h8" stroke="#6a88bd" />
          <path d="M0 3h10v8H0z" fill="#2f5fb4" />
          <path d="M2 5l1.500 4L5 5.500 6.500 9 8 5" stroke="#fff" fill="none" />
        </svg>
        Лабораторная_рабо...
      </button>
      <div className="ml-auto flex h-full items-center">
        <Handle className="mr-2" />
        <span className="mr-5 h-4 w-4 bg-[#c9c9c9] text-center leading-4 text-black">RU</span>
      </div>
      <div className="relative flex h-full w-[128px] items-center gap-[3px] border-l border-black bg-linear-to-b from-[#3c3c3c] to-[#0e0e0e] pl-[10px]">
        <button type="button" aria-label="Скрытые значки" className="absolute top-2 -left-2 flex h-[15px] w-[15px] items-center justify-center rounded-full border border-[#777] bg-[#333]">
          <svg viewBox="0 0 8 8" className="h-2 w-2"><path d="M6 1L2 4l4 3" stroke="#ddd" strokeWidth="1.500" fill="none" /></svg>
        </button>
        <svg viewBox="0 0 14 14" className="h-[14px] w-[14px]">
          <path d="M5 8l7-1 2 4-6 3z" fill="#b9bcc4" />
          <path d="M0 1l7 1-2 2 3 4-3 2-3-4-2 1z" fill="#3ebd32" />
        </svg>
        <svg viewBox="0 0 16 14" className="h-[14px] w-4" stroke="#999">
          <path d="M5.500.5h10v8h-10z" fill="#666" />
          <path d="M.5 4.500h9v7h-9zM3 13.500h5" fill="#888" />
        </svg>
        <svg viewBox="0 0 16 14" className="h-[14px] w-4">
          <path d="M0 2h7v7H0z" fill="#b5bcc4" />
          <rect x="6" y="3" width="9" height="7" rx="1" fill="#e9a465" />
          <path d="M8 3V1h5v2" fill="none" stroke="#f4c9a0" strokeWidth="1.500" />
          <path d="M6 10h10l-5 4z" fill="#3b9be0" />
        </svg>
        <svg viewBox="0 0 15 14" className="h-[14px] w-[15px]">
          <path d="M0 7C1-1 14-1 15 7l-2.500-1.500L10 7 7.500 5.500 5 7 2.500 5.500z" fill="#2fa84c" />
          <path d="M7.500 5v7a1.500 1.500 0 0 1-3 0" fill="none" stroke="#7fce8d" />
        </svg>
        <time className="ml-1">10:36</time>
      </div>
    </footer>
  );
}

export default function App() {
  return (
    <div className="flex h-screen w-full flex-col overflow-hidden bg-[#333]">
      <div className="flex min-h-0 flex-1">
        <WordWindow />
        <BrowserWindow />
      </div>
      <Taskbar />
    </div>
  );
}
